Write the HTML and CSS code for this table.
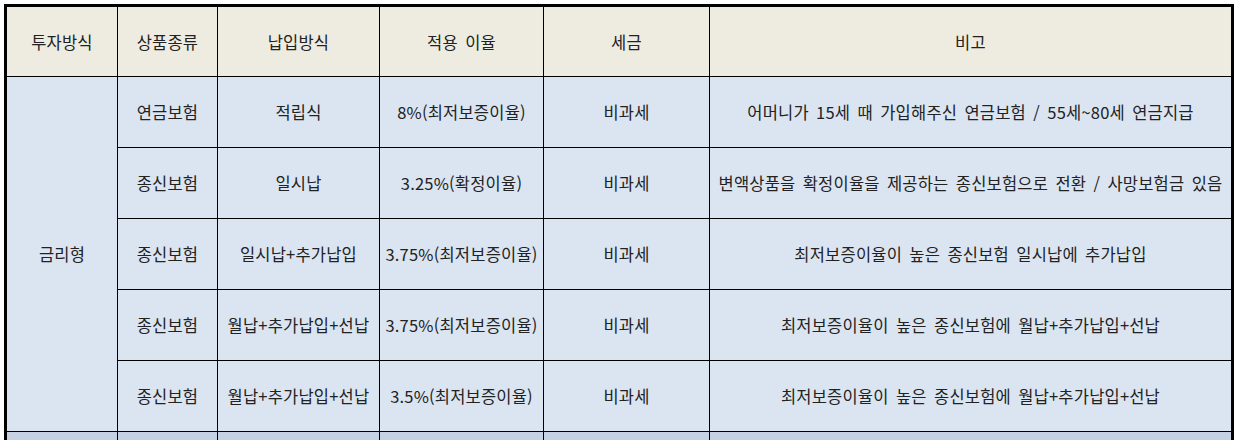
FILE: index.html
```html
<!DOCTYPE html>
<html lang="ko">
<head>
<meta charset="utf-8">
<title>투자방식</title>
<link rel="stylesheet" href="styles.css">
</head>
<body>
<div class="sheet">
  <div class="grid">
    <div class="cell head">투자방식</div>
    <div class="cell head">상품종류</div>
    <div class="cell head">납입방식</div>
    <div class="cell head">적용 이율</div>
    <div class="cell head">세금</div>
    <div class="cell head">비고</div>

    <div class="cell body group">금리형</div>

    <div class="cell body">연금보험</div>
    <div class="cell body">적립식</div>
    <div class="cell body">8%(최저보증이율)</div>
    <div class="cell body">비과세</div>
    <div class="cell body">어머니가 15세 때 가입해주신 연금보험 / 55세~80세 연금지급</div>

    <div class="cell body">종신보험</div>
    <div class="cell body">일시납</div>
    <div class="cell body">3.25%(확정이율)</div>
    <div class="cell body">비과세</div>
    <div class="cell body">변액상품을 확정이율을 제공하는 종신보험으로 전환 / 사망보험금 있음</div>

    <div class="cell body">종신보험</div>
    <div class="cell body">일시납+추가납입</div>
    <div class="cell body">3.75%(최저보증이율)</div>
    <div class="cell body">비과세</div>
    <div class="cell body">최저보증이율이 높은 종신보험 일시납에 추가납입</div>

    <div class="cell body">종신보험</div>
    <div class="cell body">월납+추가납입+선납</div>
    <div class="cell body">3.75%(최저보증이율)</div>
    <div class="cell body">비과세</div>
    <div class="cell body">최저보증이율이 높은 종신보험에 월납+추가납입+선납</div>

    <div class="cell body">종신보험</div>
    <div class="cell body">월납+추가납입+선납</div>
    <div class="cell body">3.5%(최저보증이율)</div>
    <div class="cell body">비과세</div>
    <div class="cell body">최저보증이율이 높은 종신보험에 월납+추가납입+선납</div>

    <div class="cell next"></div>
    <div class="cell next"></div>
    <div class="cell next"></div>
    <div class="cell next"></div>
    <div class="cell next"></div>
    <div class="cell next"></div>
  </div>
</div>
</body>
</html>
```

FILE: styles.css
```css
html, body {
  margin: 0;
  padding: 0;
  background: #ffffff;
  height: 440px;
  overflow: hidden;
}

.sheet {
  padding: 4px 0 0 4px;
}

.grid {
  display: grid;
  width: max-content;
  grid-template-columns: 110px 99px 161px 163px 165px 521px;
  grid-template-rows: 69px repeat(5, 70px) 70px;
  gap: 1px;
  background: #000000;
  border: 3px solid #000000;
  border-bottom: 0;
  font-family: "Noto Sans CJK KR", "Noto Sans", sans-serif;
  font-size: 16.5px;
  letter-spacing: 0.2px;
  word-spacing: 2.5px;
  color: #222222;
}

.cell {
  display: flex;
  align-items: center;
  justify-content: center;
  text-align: center;
  white-space: nowrap;
  overflow: hidden;
}

.head {
  background: #eeece1;
}

.body {
  background: #dbe5f1;
}

.group {
  grid-row: 2 / span 5;
}

.next {
  background: #c6d2e4;
}
```
